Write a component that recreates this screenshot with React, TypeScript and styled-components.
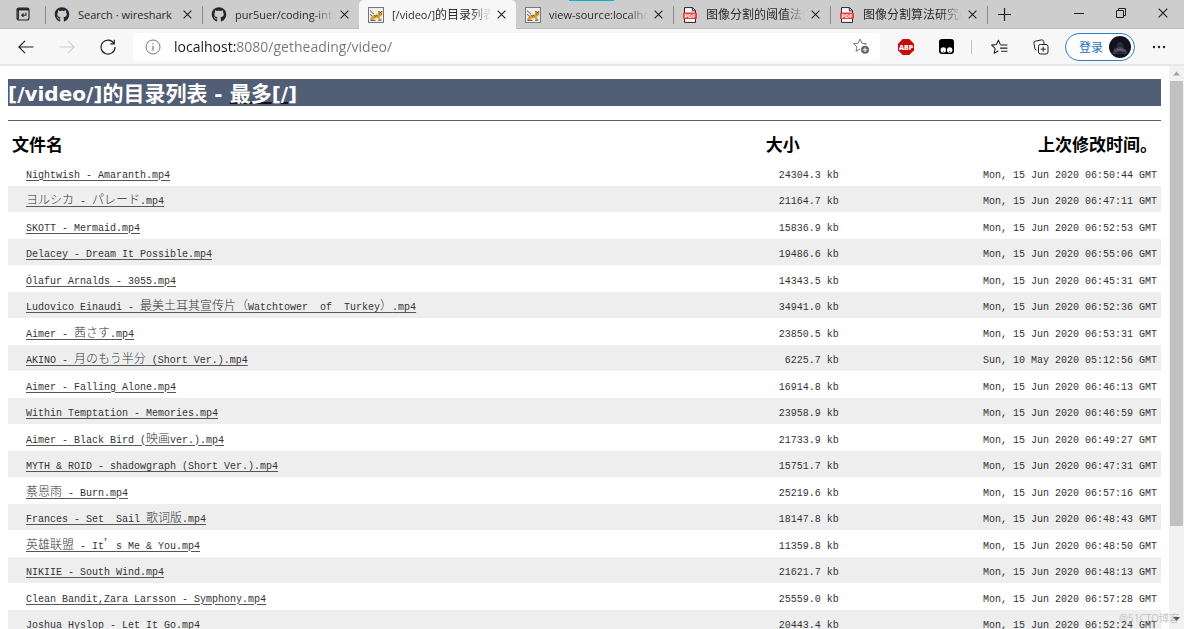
import React from 'react';
import styled, { createGlobalStyle, css } from 'styled-components';
import { FaGithub } from 'react-icons/fa';

const uiFont = `"Open Sans", "Noto Sans CJK SC", sans-serif`;

const GlobalStyle = createGlobalStyle`
  *, *::before, *::after { box-sizing: border-box; }
  html, body { margin: 0; height: 100%; overflow: hidden; background: #fff; }
  #root { height: 100%; }
  button, input { font: inherit; }
`;

const Window = styled.div`
  display: flex;
  flex-direction: column;
  height: 100vh;
  font-family: ${uiFont};
  color: #1a1a1a;
`;

const PlainButton = styled.button`
  display: flex;
  align-items: center;
  justify-content: center;
  flex: none;
  padding: 0;
  border: 0;
  background: none;
  color: inherit;
`;

/* Tab strip */
const TabStrip = styled.header`
  position: relative;
  display: flex;
  height: 29px;
  background: #cdcdcd;
  border-bottom: 1px solid #bdbdbd;
`;

const Loading = styled.div`
  position: absolute;
  top: 0;
  left: 569px;
  width: 45px;
  height: 1px;
  background: #00b7c3;
`;

const TabActions = styled(PlainButton)`
  width: 45px;
`;

const TabList = styled.nav`
  display: flex;
  flex: 1;
  min-width: 0;
`;

const divider = css`
  &::before {
    content: '';
    position: absolute;
    left: 0;
    top: 6px;
    width: 1px;
    height: 18px;
    background: #8a8a8a;
  }
`;

const Tab = styled.div<{ $active?: boolean; $divider?: boolean }>`
  position: relative;
  display: flex;
  align-items: center;
  flex: 0 1 157px;
  min-width: 60px;
  height: 29px;
  padding: 0 7px 0 9px;

  & > svg {
    flex: none;
    width: 16px;
  }

  ${(p) => p.$divider && divider}
  ${(p) =>
    p.$active &&
    css`
      background: #f7f7f7;
      border-radius: 5px 5px 0 0;
    `}
`;

const TabTitle = styled.a<{ $fade?: boolean }>`
  flex: 1;
  min-width: 0;
  margin: 0 2px 0 8px;
  overflow: hidden;
  white-space: nowrap;
  font-size: 11px;
  line-height: 20px;
  color: #2b2b2b;
  text-decoration: none;
  ${(p) =>
    p.$fade &&
    css`
      mask-image: linear-gradient(to right, #000 calc(100% - 20px), transparent);
    `}
`;

const TabClose = styled(PlainButton)`
  width: 16px;
  height: 16px;
`;

const NewTab = styled(PlainButton)`
  position: relative;
  width: 34px;
  ${divider}
`;

const WindowControls = styled.div`
  display: flex;
  flex: none;
`;

const WindowButton = styled(PlainButton)`
  width: 42px;
  height: 26px;
`;

/* Toolbar */
const Toolbar = styled.div`
  display: flex;
  align-items: center;
  height: 37px;
  padding-right: 5px;
  background: #f7f7f7;
  border-bottom: 2px solid #e8e8e8;
`;

const NavButton = styled(PlainButton)<{ $dim?: boolean }>`
  width: 41px;
  height: 28px;
  color: ${(p) => (p.$dim ? '#cfcfcf' : '#222')};
`;

const Navigation = styled.div`
  display: flex;
  padding: 0 5px;
`;

const AddressBar = styled.div`
  display: flex;
  align-items: center;
  flex: 1;
  height: 28px;
  padding: 0 10px 0 12px;
  gap: 13px;
  border-radius: 4px;
  background: #fff;
`;

const Address = styled.input`
  flex: 1;
  min-width: 0;
  height: 24px;
  padding: 0;
  border: 0;
  outline: 0;
  font-size: 14px;
  line-height: 24px;
  color: transparent;
  background: linear-gradient(to right, #1a1a1a 62px, #767676 62px);
  background-clip: text;
  -webkit-background-clip: text;
`;

const ToolbarIcon = styled(PlainButton)`
  width: 41px;
  height: 28px;
`;

const ToolbarDivider = styled.span`
  width: 1px;
  height: 14px;
  margin: 0 7px 0 4px;
  background: #c4c4c4;
`;

const Extensions = styled.div`
  display: flex;
  align-items: center;
  padding-left: 5px;
`;

const SignIn = styled(PlainButton)`
  justify-content: flex-end;
  width: 70px;
  height: 28px;
  gap: 6px;
  padding: 0 3px;
  border: 1px solid #2f7fc6;
  border-radius: 14px;
  background: #fff;
  color: #2372bd;
  font-size: 12px;
  margin: 0 3px 0 4px;
`;

/* Page */
const Viewport = styled.div`
  position: relative;
  display: flex;
  flex: 1;
  min-height: 0;
`;

const Page = styled.main`
  flex: 1;
  min-width: 0;
  overflow: hidden;
  padding: 13px 8px 0;
`;

const Title = styled.h1`
  margin: 0;
  padding-top: 3px;
  height: 27px;
  background: #525d76;
  color: #fff;
  font-family: "DejaVu Sans", "Noto Sans CJK SC", sans-serif;
  font-size: 20px;
  font-weight: 700;
  line-height: 24px;
  white-space: nowrap;
`;

const TitleLink = styled.a`
  color: #fff;
  text-decoration: underline 2px #111;
  text-underline-offset: 1px;
`;

const Rule = styled.hr`
  height: 1px;
  margin: 14px 0 10px;
  border: 0;
  background: #525d76;
`;

const Listing = styled.table`
  width: 100%;
  table-layout: fixed;
  border-collapse: collapse;
  color: #333;
  font-family: "Liberation Mono", "Noto Sans CJK SC", monospace;
  font-size: 10px;
  line-height: 18px;
`;

const NameColumn = styled.col`
  width: 62%;
`;

const SizeColumn = styled.col`
  width: 120px;
`;

type Align = 'left' | 'center' | 'right';

const HeadCell = styled.th<{ $align: Align }>`
  height: 28px;
  padding: 0 4px;
  text-align: ${(p) => p.$align};
  vertical-align: top;
  color: #000;
  font-family: "Noto Sans CJK SC", sans-serif;
  font-size: 17px;
  font-weight: 700;
  line-height: 26px;
`;

const Row = styled.tr`
  height: 27px;

  &:nth-child(even) {
    height: 26px;
    background: #eee;
  }
`;

const Cell = styled.td<{ $align?: Align }>`
  padding: 6px 4px 0;
  text-align: ${(p) => p.$align ?? 'left'};
  white-space: pre;
  vertical-align: middle;

  &:first-child {
    padding-left: 18px;
  }
`;

const FileLink = styled.a`
  color: #333;
  text-decoration: underline 1px #555;
  text-underline-offset: 2px;
`;

const Wide = styled.span<{ $size: number; $light?: boolean }>`
  font-family: "Noto Sans CJK SC", sans-serif;
  font-size: ${(p) => p.$size}px;
  font-weight: ${(p) => (p.$light ? 300 : 'inherit')};
  line-height: 1;
`;

const Scrollbar = styled.div`
  display: flex;
  flex-direction: column;
  align-items: center;
  width: 15px;
  padding-bottom: 3px;
  background: #f1f1f1;
`;

const ScrollTrack = styled.div`
  flex: 1;
  width: 13px;
`;

const ScrollThumb = styled.div`
  height: 84%;
  background: #c1c1c1;
`;

const Watermark = styled.span`
  position: absolute;
  right: 5px;
  bottom: 1px;
  font-size: 10px;
  line-height: 20px;
  color: rgba(150, 150, 150, 0.55);
`;

/* Icons */
const CloseIcon = ({ size = 9 }: { size?: number }) => (
  <svg width={size} height={size} viewBox="0 0 10 10" stroke="#222" strokeWidth="1.2" fill="none">
    <path d="M.7.7l8.6 8.6M9.3.7L.7 9.3" />
  </svg>
);

const TabActionsIcon = () => (
  <svg width="14" height="14" viewBox="0 0 14 14" fill="none" stroke="#222">
    <rect x="1" y="1" width="12" height="12" rx="2" strokeWidth="1.1" />
    <path d="M1 2.3h12" strokeWidth="2.2" />
    <path d="M2.2 3v9" strokeWidth="1.4" />
    <path d="M9.9 5.7v2.500H6M7.500 6.500L5.800 8.200l1.700 1.700" strokeWidth="1.1" />
  </svg>
);

const TomcatIcon = () => (
  <svg width="16" height="16" viewBox="0 0 16 16">
    <rect x=".5" y=".5" width="15" height="15" fill="#f1f0ec" stroke="#777" />
    <path d="M2 13l1.500-3.500L6.500 8l3-.3 1-3.700 1.200 1.200h1.300L14.200 4l.2 3.300-1.200 1.700-1.700 1 1.700 2.700h-1.700L9.300 11l-2.800.7L4 13.200z" fill="#d9a03a" />
    <path d="M2 3.500l4 3.800M2 7.300L4.500 9M10.500 4l1.200 1.300h1.300L14.200 4M6.500 8l1 1.700M8.500 7.800l.7 1.500M11 7h.9M13 7h.8M2.500 13.400h5M10 13.200h3.500" stroke="#4a3d22" strokeWidth=".9" fill="none" />
  </svg>
);

const PdfIcon = () => (
  <svg width="14" height="16" viewBox="0 0 14 16">
    <path d="M1.500.6h8L12.500 3.600v11.800h-11z" fill="#fff" stroke="#222" strokeWidth="1" />
    <path d="M9.300.6v3.200h3.200" fill="none" stroke="#222" />
    <rect y="5.500" width="14" height="6.500" rx="1" fill="#f03a3e" />
    <text x="7" y="10.600" textAnchor="middle" fontFamily="DejaVu Sans" fontWeight="700" fontSize="5" fill="#fff">PDF</text>
  </svg>
);

const BackIcon = () => (
  <svg width="16" height="14" viewBox="0 0 16 14" fill="none" stroke="currentColor" strokeWidth="1.2">
    <path d="M15.500 7H1M7 .8L.9 7 7 13.200" />
  </svg>
);

const ForwardIcon = () => (
  <svg width="16" height="14" viewBox="0 0 16 14" fill="none" stroke="currentColor" strokeWidth="1.2">
    <path d="M.5 7H15M9 .8L15.100 7 9 13.200" />
  </svg>
);

const ReloadIcon = () => (
  <svg width="16" height="16" viewBox="0 0 16 16" fill="none" stroke="currentColor" strokeWidth="1.2">
    <path d="M14 4.500A7 7 0 1 0 15 8M14.300.8v4h-4" />
  </svg>
);

const InfoIcon = () => (
  <svg width="16" height="16" viewBox="0 0 16 16" fill="none" stroke="#767676">
    <circle cx="8" cy="8" r="7" />
    <path d="M8 7v4.500M8 4.300v1.300" strokeWidth="1.200" />
  </svg>
);

const star = 'M7 1l1.900 4.200 4.500.5-3.300 3.100.9 4.500L7 11l-4 2.300.9-4.500L.6 5.700l4.500-.5z';

const AddFavoriteIcon = () => (
  <svg width="17" height="17" viewBox="0 0 17 17">
    <path d={star} fill="none" stroke="#767676" />
    <circle cx="12" cy="11.800" r="4.700" fill="#fff" />
    <circle cx="12" cy="11.800" r="4" fill="#666" />
    <path d="M12 9.600V14M9.800 11.800h4.400" stroke="#fff" />
  </svg>
);

const AdblockIcon = () => (
  <svg width="16" height="16" viewBox="0 0 16 16">
    <path d="M4.700 0h6.600L16 4.700v6.600L11.300 16H4.700L0 11.300V4.700z" fill="#c70d0b" />
    <text x="8" y="10.700" textAnchor="middle" fontFamily="Open Sans" fontWeight="800" fontSize="7" fill="#fff">ABP</text>
  </svg>
);

const ScriptIcon = () => (
  <svg width="15" height="15" viewBox="0 0 15 15">
    <rect width="15" height="15" rx="3" fill="#000" />
    <circle cx="4.300" cy="11" r="2.700" fill="#fff" />
    <circle cx="10.700" cy="11" r="2.700" fill="#fff" />
    <circle cx="4.300" cy="12.500" r=".5" />
    <circle cx="10.700" cy="12.500" r=".5" />
  </svg>
);

const FavoritesIcon = () => (
  <svg width="17" height="15" viewBox="0 0 16 14" fill="none" stroke="#222">
    <path d="M8.800 5.200L7 1 5.100 5.200.6 5.700l3.300 3.100-.9 4.500L7 11M9 5.500h6.500M8.500 8.500h7M9.500 11.500h6" strokeLinejoin="round" />
  </svg>
);

const CollectionsIcon = () => (
  <svg width="16" height="16" viewBox="0 0 16 16" fill="none" stroke="#222">
    <rect x="5.500" y="5.500" width="9.500" height="9.500" rx="2" />
    <path d="M10.200 7.700v5M7.700 10.200h5M3.500 11.300L2 10.200 .9 4.500a2 2 0 0 1 1.500-2.300L8.300.9a2 2 0 0 1 2.400 1.500l.4 2.600" />
  </svg>
);

const Avatar = () => (
  <svg width="22" height="22" viewBox="0 0 22 22">
    <circle cx="11" cy="11" r="11" fill="#11121d" />
    <path d="M8 9.500c0-5 6-5 6 0l1.500 2.500h-9z" fill="#292938" />
    <path d="M5 13l6-2 6 2.500 1 3.500-7-1.500L4 17z" fill="#47485c" />
    <path d="M8 13.300l6 .8" stroke="#a25560" />
    <path d="M3.500 17.500h14" stroke="#2b3a58" />
  </svg>
);

const MoreIcon = () => (
  <svg width="14" height="4" viewBox="0 0 14 4" fill="#222">
    <circle cx="2" cy="2" r="1.200" />
    <circle cx="7" cy="2" r="1.200" />
    <circle cx="12" cy="2" r="1.200" />
  </svg>
);

const ScrollArrow = ({ down }: { down?: boolean }) => (
  <svg width="15" height="15" viewBox="0 0 15 15">
    <path d={down ? 'M4 6h7l-3.500 4z' : 'M4 9.500h7l-3.500-4z'} fill={down ? '#505050' : '#a3a3a3'} />
  </svg>
);

/* Data */
const tabs = [
  { icon: <FaGithub size={15} color="#24292e" />, title: 'Search · wireshark', divider: true },
  { icon: <FaGithub size={15} color="#24292e" />, title: 'pur5uer/coding-inte', divider: true, fade: true },
  { icon: <TomcatIcon />, title: '[/video/]的目录列表', active: true, fade: true },
  { icon: <TomcatIcon />, title: 'view-source:localho', fade: true },
  { icon: <PdfIcon />, title: '图像分割的阈值法综', divider: true, fade: true },
  { icon: <PdfIcon />, title: '图像分割算法研究综', divider: true, fade: true },
];

const files: [string, string, string][] = [
  ['Nightwish - Amaranth.mp4', '24304.3 kb', 'Mon, 15 Jun 2020 06:50:44 GMT'],
  ['ヨルシカ - パレード.mp4', '21164.7 kb', 'Mon, 15 Jun 2020 06:47:11 GMT'],
  ['SKOTT - Mermaid.mp4', '15836.9 kb', 'Mon, 15 Jun 2020 06:52:53 GMT'],
  ['Delacey - Dream It Possible.mp4', '19486.6 kb', 'Mon, 15 Jun 2020 06:55:06 GMT'],
  ['Ólafur Arnalds - 3055.mp4', '14343.5 kb', 'Mon, 15 Jun 2020 06:45:31 GMT'],
  ['Ludovico Einaudi - 最美土耳其宣传片（Watchtower  of  Turkey）.mp4', '34941.0 kb', 'Mon, 15 Jun 2020 06:52:36 GMT'],
  ['Aimer - 茜さす.mp4', '23850.5 kb', 'Mon, 15 Jun 2020 06:53:31 GMT'],
  ['AKINO - 月のもう半分 (Short Ver.).mp4', '6225.7 kb', 'Sun, 10 May 2020 05:12:56 GMT'],
  ['Aimer - Falling Alone.mp4', '16914.8 kb', 'Mon, 15 Jun 2020 06:46:13 GMT'],
  ['Within Temptation - Memories.mp4', '23958.9 kb', 'Mon, 15 Jun 2020 06:46:59 GMT'],
  ['Aimer - Black Bird (映画ver.).mp4', '21733.9 kb', 'Mon, 15 Jun 2020 06:49:27 GMT'],
  ['MYTH & ROID - shadowgraph (Short Ver.).mp4', '15751.7 kb', 'Mon, 15 Jun 2020 06:47:31 GMT'],
  ['蔡恩雨 - Burn.mp4', '25219.6 kb', 'Mon, 15 Jun 2020 06:57:16 GMT'],
  ['Frances - Set  Sail 歌词版.mp4', '18147.8 kb', 'Mon, 15 Jun 2020 06:48:43 GMT'],
  ['英雄联盟 - It’s Me & You.mp4', '11359.8 kb', 'Mon, 15 Jun 2020 06:48:50 GMT'],
  ['NIKIIE - South Wind.mp4', '21621.7 kb', 'Mon, 15 Jun 2020 06:48:13 GMT'],
  ['Clean Bandit,Zara Larsson - Symphony.mp4', '25559.0 kb', 'Mon, 15 Jun 2020 06:57:28 GMT'],
  ['Joshua Hyslop - Let It Go.mp4', '20443.4 kb', 'Mon, 15 Jun 2020 06:52:24 GMT'],
];

/* Full-width characters are set a little larger than the Latin text around them. */
const MixedText = ({ text, size, light }: { text: string; size: number; light?: boolean }) => (
  <>
    {text.split(/([’\u3000-\u30ff\u4e00-\u9fff\uff00-\uffef]+)/).map((part, i) =>
      i % 2 ? <Wide key={i} lang="zh-CN" $size={size} $light={light}>{part}</Wide> : part,
    )}
  </>
);

export default function App() {
  return (
    <Window>
      <GlobalStyle />
      <TabStrip>
        <TabActions aria-label="Tab actions"><TabActionsIcon /></TabActions>
        <TabList>
          {tabs.map((tab) => (
            <Tab key={tab.title} $active={tab.active} $divider={tab.divider}>
              {tab.icon}
              <TabTitle href="#" $fade={tab.fade}><MixedText text={tab.title} size={12} /></TabTitle>
              <TabClose aria-label="Close tab"><CloseIcon /></TabClose>
            </Tab>
          ))}
          <NewTab aria-label="New tab">
            <svg width="13" height="13" viewBox="0 0 13 13" stroke="#222" strokeWidth="1.200">
              <path d="M6.500 0v13M0 6.500h13" />
            </svg>
          </NewTab>
        </TabList>
        <WindowControls>
          <WindowButton aria-label="Minimize">
            <svg width="10" height="10" viewBox="0 0 10 10" stroke="#222"><path d="M0 5.500h10" /></svg>
          </WindowButton>
          <WindowButton aria-label="Restore">
            <svg width="10" height="10" viewBox="0 0 10 10" fill="none" stroke="#222">
              <path d="M.5 2.500h7v7h-7zM2.500 2.500v-2h7v7h-2" />
            </svg>
          </WindowButton>
          <WindowButton aria-label="Close"><CloseIcon size={10} /></WindowButton>
        </WindowControls>
        <Loading />
      </TabStrip>

      <Toolbar>
        <Navigation>
          <NavButton aria-label="Back"><BackIcon /></NavButton>
          <NavButton aria-label="Forward" $dim><ForwardIcon /></NavButton>
          <NavButton aria-label="Reload"><ReloadIcon /></NavButton>
        </Navigation>
        <AddressBar>
          <InfoIcon />
          <Address aria-label="Address" defaultValue="localhost:8080/getheading/video/" />
          <PlainButton aria-label="Add to favorites"><AddFavoriteIcon /></PlainButton>
        </AddressBar>
        <Extensions>
          <ToolbarIcon aria-label="Adblock Plus"><AdblockIcon /></ToolbarIcon>
          <ToolbarIcon aria-label="Script manager"><ScriptIcon /></ToolbarIcon>
          <ToolbarDivider />
          <ToolbarIcon aria-label="Favorites"><FavoritesIcon /></ToolbarIcon>
          <ToolbarIcon aria-label="Collections"><CollectionsIcon /></ToolbarIcon>
          <SignIn>登录<Avatar /></SignIn>
          <ToolbarIcon aria-label="Settings and more"><MoreIcon /></ToolbarIcon>
        </Extensions>
      </Toolbar>

      <Viewport>
        <Page>
          <Title>
            <MixedText text="[/video/]的目录列表 - " size={21} />
            <TitleLink href="#"><MixedText text="最多" size={21} /></TitleLink>
            [<TitleLink href="#">/</TitleLink>]
          </Title>
          <Rule />
          <Listing>
            <colgroup>
              <NameColumn />
              <SizeColumn />
              <col />
            </colgroup>
            <thead>
              <tr>
                <HeadCell $align="left">文件名</HeadCell>
                <HeadCell $align="center">大小</HeadCell>
                <HeadCell $align="right">上次修改时间。</HeadCell>
              </tr>
            </thead>
            <tbody>
              {files.map(([name, size, modified]) => (
                <Row key={name}>
                  <Cell><FileLink href="#"><MixedText text={name} size={12} light /></FileLink></Cell>
                  <Cell $align="right">{size}</Cell>
                  <Cell $align="right">{modified}</Cell>
                </Row>
              ))}
            </tbody>
          </Listing>
        </Page>
        <Scrollbar>
          <ScrollArrow />
          <ScrollTrack><ScrollThumb /></ScrollTrack>
          <ScrollArrow down />
        </Scrollbar>
        <Watermark>@51CTO博客</Watermark>
      </Viewport>
    </Window>
  );
}
